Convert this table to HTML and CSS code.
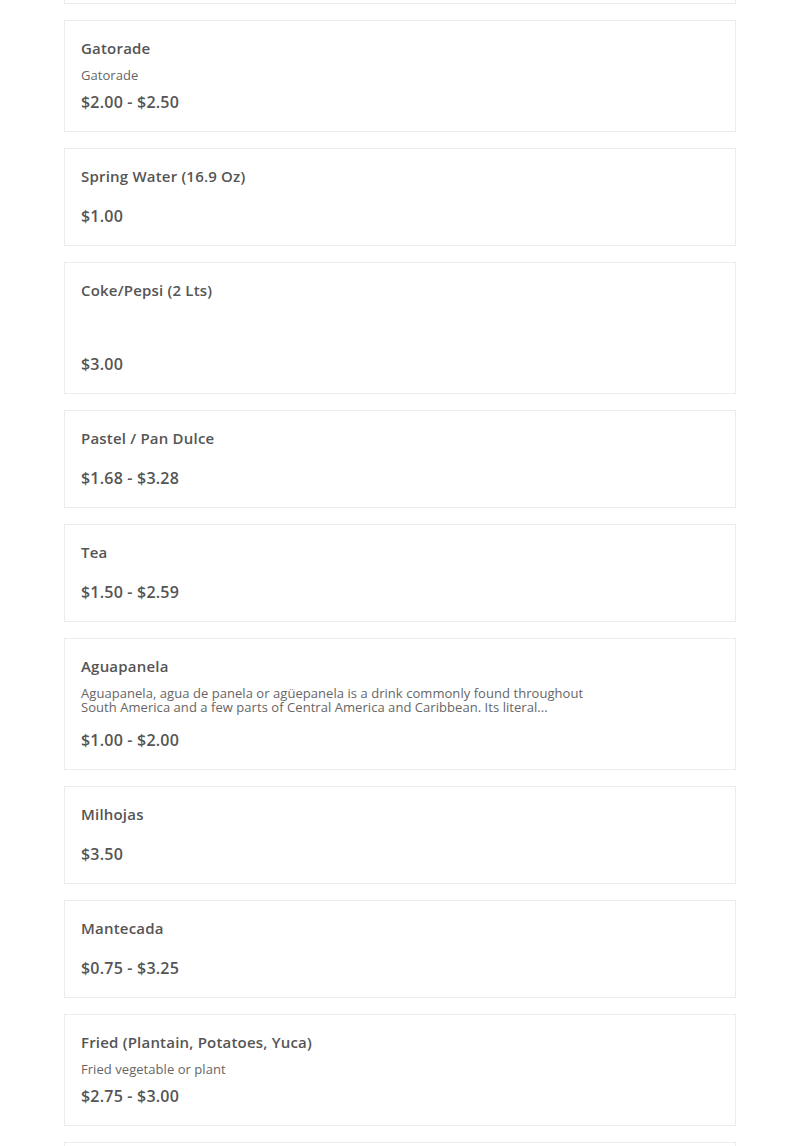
FILE: index.html
```html
<!DOCTYPE html>
<html>
<head>
<meta charset="utf-8">
<link rel="stylesheet" href="styles.css">
</head>
<body>
<div class="list">
  <div class="card first">
    <div class="title">Coffee</div>
    <div class="price">$1.00</div>
  </div>
  <div class="card">
    <div class="title">Gatorade</div>
    <div class="desc">Gatorade</div>
    <div class="price after-desc">$2.00 - $2.50</div>
  </div>
  <div class="card">
    <div class="title">Spring Water (16.9 Oz)</div>
    <div class="price">$1.00</div>
  </div>
  <div class="card">
    <div class="title">Coke/Pepsi (2 Lts)</div>
    <div class="desc blank"></div>
    <div class="price after-long">$3.00</div>
  </div>
  <div class="card">
    <div class="title">Pastel / Pan Dulce</div>
    <div class="price">$1.68 - $3.28</div>
  </div>
  <div class="card">
    <div class="title">Tea</div>
    <div class="price">$1.50 - $2.59</div>
  </div>
  <div class="card">
    <div class="title">Aguapanela</div>
    <div class="desc long">Aguapanela, agua de panela or agüepanela is a drink commonly found throughout South America and a few parts of Central America and Caribbean. Its literal...</div>
    <div class="price after-long">$1.00 - $2.00</div>
  </div>
  <div class="card">
    <div class="title">Milhojas</div>
    <div class="price">$3.50</div>
  </div>
  <div class="card">
    <div class="title">Mantecada</div>
    <div class="price">$0.75 - $3.25</div>
  </div>
  <div class="card">
    <div class="title">Fried (Plantain, Potatoes, Yuca)</div>
    <div class="desc">Fried vegetable or plant</div>
    <div class="price after-desc">$2.75 - $3.00</div>
  </div>
  <div class="card">
    <div class="title">Empanada</div>
    <div class="price">$1.50</div>
  </div>
</div>
</body>
</html>
```
FILE: styles.css
```css
html, body {
  margin: 0;
  padding: 0;
  background: #ffffff;
}
body {
  font-family: "Open Sans", "Liberation Sans", sans-serif;
  color: #555555;
}
.list {
  width: 672px;
  margin: 0 auto;
  display: flex;
  flex-direction: column;
  gap: 16px;
}
.card {
  border: 1px solid #ececec;
  padding: 16px 16px 18px;
  display: flex;
  flex-direction: column;
  background: #fff;
}
.card.first {
  margin-top: -94px;
}
.title {
  font-size: 15px;
  font-weight: 600;
  line-height: 22px;
  letter-spacing: 0.2px;
  color: #555;
}
.desc {
  font-size: 13px;
  line-height: 14px;
  margin-top: 9px;
  color: #666;
  max-width: 512px;
  letter-spacing: 0.05px;
}
.desc.blank {
  height: 28px;
}
.price {
  font-size: 16px;
  font-weight: 600;
  line-height: 22px;
  letter-spacing: 0.2px;
  margin-top: 18px;
  color: #555;
}
.price.after-desc {
  margin-top: 9px;
}
.price.after-long {
  margin-top: 15px;
}
```
